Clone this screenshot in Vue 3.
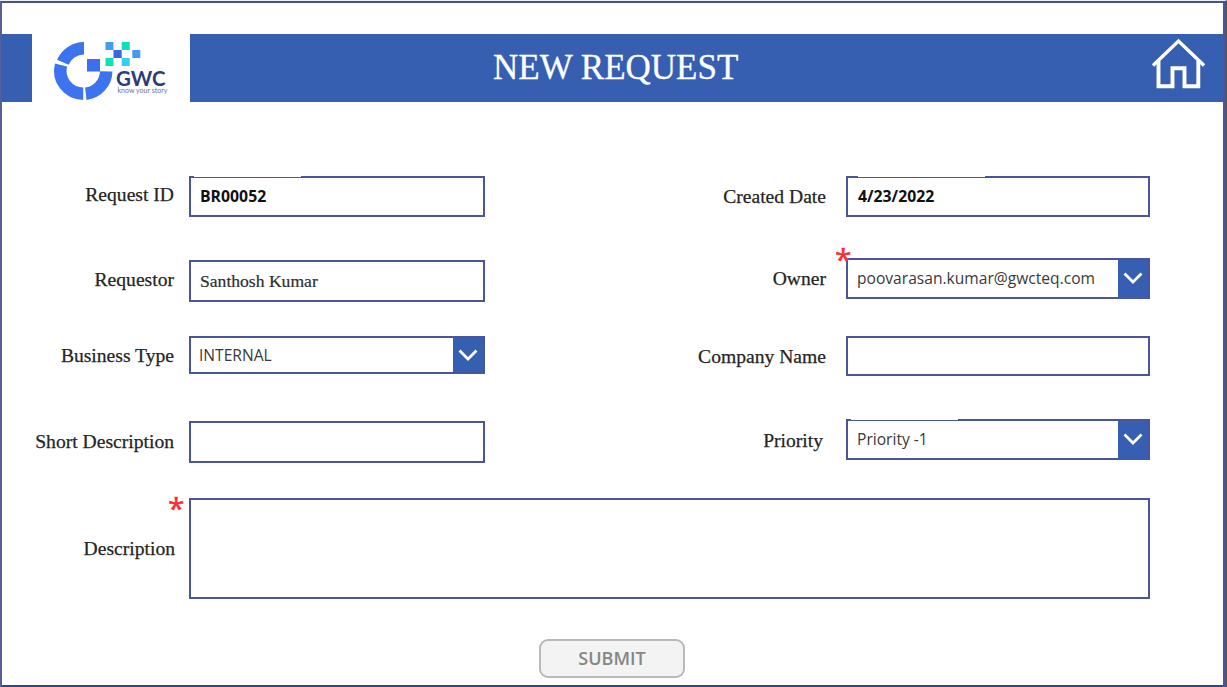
<script setup>
const left = [
  { id: 'request-id', label: 'Request ID', value: 'BR00052', kind: 'strong', notch: true },
  { id: 'requestor', label: 'Requestor', value: 'Santhosh Kumar', kind: 'serif' },
  { id: 'business', label: 'Business Type', value: 'INTERNAL', kind: 'plain', select: true },
  { id: 'short', label: 'Short Description', value: '', kind: 'plain' },
]
const right = [
  { id: 'created', label: 'Created Date', value: '4/23/2022', kind: 'strong', notch: true },
  { id: 'owner', label: 'Owner', value: 'poovarasan.kumar@gwcteq.com', kind: 'plain', select: true, required: true },
  { id: 'company', label: 'Company Name', value: '', kind: 'plain' },
  { id: 'priority', label: 'Priority', value: 'Priority -1', kind: 'plain', select: true, notch: true },
]
const columns = [{ name: 'left', fields: left }, { name: 'right', fields: right }]
</script>

<template>
  <main class="screen">
    <header class="header">
      <div class="stub"></div>
      <div class="brand">
        <svg class="logo" width="158" height="68" viewBox="32 34 158 68">
          <g fill="none" stroke="#3d73ee" stroke-width="12.5">
            <path d="M84 48.3A23 23 0 0 0 62.8 62.3" />
            <path d="M61 65A23 23 0 0 0 83.2 93.7" />
            <path d="M85.8 93.7A23 23 0 0 0 106.2 71.3" />
          </g>
          <rect x="87" y="59" width="13" height="12.5" fill="#3d6df0" />
          <g>
            <rect x="105.5" y="42" width="8" height="8" fill="#429df0" />
            <rect x="121.7" y="42" width="8" height="8" fill="#0ee0b8" />
            <rect x="113.5" y="50" width="8.2" height="8" fill="#3769e2" />
            <rect x="132.3" y="50" width="8" height="8" fill="#429df0" />
            <rect x="105.5" y="58" width="8" height="8" fill="#0ee0b8" />
            <rect x="121.7" y="58" width="8" height="8" fill="#3accf5" />
          </g>
          <text class="logo-name" x="116" y="86.3" textLength="49.5" lengthAdjust="spacingAndGlyphs">GWC</text>
          <text class="logo-tag" x="117.5" y="93.2" textLength="50" lengthAdjust="spacingAndGlyphs">know your story</text>
        </svg>
      </div>
      <div class="bar">
        <h1 class="title">NEW REQUEST</h1>
        <svg class="home" width="54" height="52" viewBox="0 0 54 52" fill="none" stroke="#fff">
          <path d="M2 27.5 27.5 3 53 27.5" stroke-width="3.4" />
          <path d="M7.5 23V48.3H21.5V30.2H33.5V48.3H47.3V23" stroke-width="3.9" />
        </svg>
      </div>
    </header>

    <section class="form">
      <div class="columns">
        <div v-for="col in columns" :key="col.name" class="column" :class="col.name">
          <div v-for="f in col.fields" :key="f.id" class="field" :class="f.id">
            <span class="label"><span class="label-text">{{ f.label }}</span></span>
            <div class="box" :class="[f.kind, { notch: f.notch }]">
              <span class="value">{{ f.value }}</span>
              <span v-if="f.select" class="arrow">
                <svg width="20" height="14" viewBox="0 0 20 14" fill="none" stroke="#fff" stroke-width="2.8">
                  <path d="M1.5 2.5 10 11 18.5 2.5" />
                </svg>
              </span>
              <span v-if="f.required" class="star owner-star">*</span>
            </div>
          </div>
        </div>
      </div>
      <div class="field description">
        <span class="label"><span class="label-text">Description</span></span>
        <div class="box"><span class="star description-star">*</span></div>
      </div>
      <button class="submit" disabled>SUBMIT</button>
    </section>
  </main>
</template>

<style>
body { background: #fff; overflow: hidden; }
</style>

<style scoped>
.screen {
  box-sizing: border-box;
  width: 1227px;
  height: 687px;
  border-style: solid;
  border-width: 1px 2px 0 0;
  border-color: #eef0f8 #555 #555 #555;
  box-shadow: inset 2px 0 #565f9c, inset 0 2px #46528f, inset -2px 0 #4c5592, inset 0 -2px #344680;
  background: #fff;
  overflow: hidden;
}
.header { display: flex; height: 68px; margin: 33px 1px 0; }
.stub { width: 31px; background: #365fb1; }
.brand { width: 158px; background: #fff; }
.logo { display: block; }
.logo-name { font: 700 21px Lato, sans-serif; fill: #2b3c78; }
.logo-tag { font: 7px Lato, sans-serif; fill: #6c7590; }
.bar { flex: 1; display: flex; align-items: center; background: #365fb1; }
.title {
  margin: 0 0 0 303px;
  width: 620px;
  font: 400 35px/68px "Liberation Serif", serif;
  letter-spacing: 0;
  -webkit-text-stroke: 0.3px;
  color: #fff;
}
.home { margin-left: 38px; margin-top: -8px; }
.form { display: flex; flex-direction: column; }
.columns { display: flex; padding-top: 74px; }
.field { display: flex; align-items: center; }
.label {
  display: flex;
  justify-content: flex-end;
  font: 19.6px/22px "Liberation Serif", serif;
  letter-spacing: 0;
  -webkit-text-stroke: 0.25px;
  color: #252525;
  white-space: nowrap;
}
.left .label { width: 174px; margin-right: 15px; }
.left .box { width: 296px; }
.right .label { width: 341px; margin-right: 20px; }
.right .box { width: 304px; }
.request-id .label, .requestor .label { padding-bottom: 3px; }
.short .label { padding-bottom: 1px; }
.business .label, .company .label, .priority .label { padding-top: 2px; }
.right .priority .label { width: 338px; margin-right: 23px; }
.box {
  position: relative;
  box-sizing: border-box;
  display: flex;
  align-items: center;
  justify-content: space-between;
  height: 100%;
  border: 2px solid #4a559e;
  background: #fff;
}
.value { padding-left: 8px; padding-bottom: 1px; white-space: nowrap; }
.plain .value { font: 15.6px/20px "Open Sans", sans-serif; color: #3a3a3a; }
.owner .value, .priority .value { padding-left: 9px; padding-bottom: 2px; }
.strong .value { padding-left: 9px; padding-bottom: 2px; font: 700 15.8px/20px "Open Sans", sans-serif; color: #111; }
.created .value { padding-left: 10px; }
.serif .value { padding-left: 9px; padding-bottom: 0; font: 17.6px/20px "Liberation Serif", serif; color: #2e2e2e; -webkit-text-stroke: 0.2px; }
.arrow {
  display: flex;
  align-items: center;
  justify-content: center;
  align-self: stretch;
  width: 30px;
  background: #365fb1;
}
.owner .arrow, .priority .arrow { padding-bottom: 2px; margin-bottom: -1px; }
.request-id { height: 41px; }
.requestor { height: 42px; margin-top: 43px; }
.business { height: 38px; margin-top: 34px; }
.short { height: 42px; margin-top: 47px; }
.created { height: 41px; }
.owner { height: 41px; margin-top: 41px; }
.company { height: 40px; margin-top: 37px; }
.priority { height: 41px; margin-top: 43px; }
.notch::before {
  content: "";
  position: absolute;
  top: -2px;
  left: 3px;
  width: 107px;
  height: 1px;
  background: #fff;
}
.created .notch::before { left: 10px; width: 127px; }
.star {
  position: absolute;
  font: 30px/30px "Open Sans", sans-serif;
  -webkit-text-stroke: 0.5px;
  color: #fb2a32;
}
.owner-star { left: -13px; top: -16px; }
.description-star { left: -23px; top: -7px; }
.description { height: 101px; margin-top: 35px; }
.description .label { width: 175px; margin-right: 14px; }
.description .box { width: 961px; }
.submit {
  width: 146px;
  height: 39px;
  margin: 40px 0 0 539px;
  padding: 0 0 2px;
  border: 2px solid #b9b9b9;
  border-radius: 9px;
  background: #f3f3f3;
  font: 600 18px/20px "Open Sans", sans-serif;
  color: #868686;
}
</style>
